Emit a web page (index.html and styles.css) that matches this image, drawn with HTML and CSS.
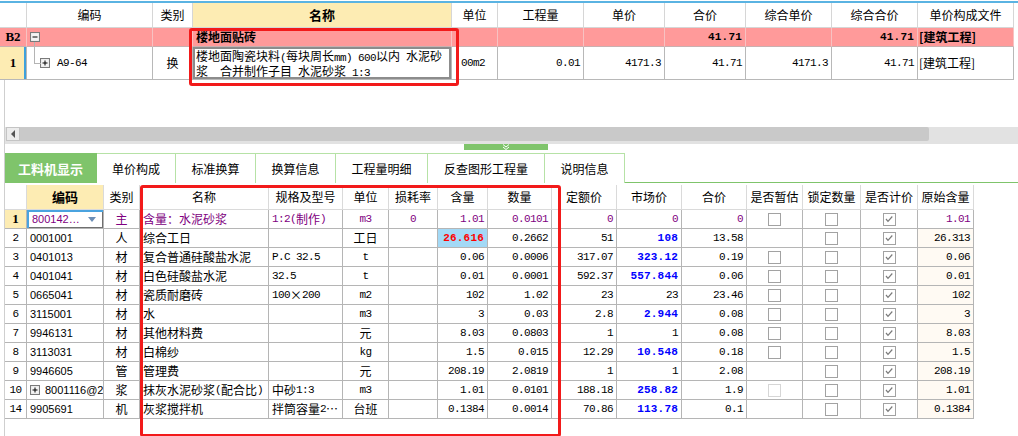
FILE: index.html
```html
<!DOCTYPE html>
<html>
<head>
<meta charset="utf-8">
<link rel="stylesheet" href="styles.css">
</head>
<body>
<div class="app">
  <div class="topline"></div>
  <div class="top">
    <div class="trow thead">
      <div class="c"></div>
      <div class="c ctr">编码</div>
      <div class="c ctr">类别</div>
      <div class="c ctr hl bold13">名称</div>
      <div class="c ctr">单位</div>
      <div class="c ctr">工程量</div>
      <div class="c ctr">单价</div>
      <div class="c ctr">合价</div>
      <div class="c ctr">综合单价</div>
      <div class="c ctr">综合合价</div>
      <div class="c ctr">单价构成文件</div>
    </div>
    <div class="trow tb2">
      <div class="c ctr serifb">B2</div>
      <div class="c tree-root"><svg class="tbox" width="10" height="10" viewBox="0 0 10 10"><rect x="0.5" y="0.5" width="9" height="9" fill="#e6e6e6" stroke="#7a7a7a"/><rect x="1.5" y="1.5" width="7" height="7" fill="#f4f4f4"/><path d="M2.5 5H7.5" stroke="#000"/></svg></div>
      <div class="c"></div>
      <div class="c b">楼地面贴砖</div>
      <div class="c"></div>
      <div class="c"></div>
      <div class="c"></div>
      <div class="c r mb">41.71</div>
      <div class="c"></div>
      <div class="c r mb">41.71</div>
      <div class="c b file">[建筑工程]</div>
    </div>
    <div class="trow tr1">
      <div class="c ctr serifb rsel">1</div>
      <div class="c tree-child"><svg class="tbox" width="10" height="10" viewBox="0 0 10 10"><rect x="0.5" y="0.5" width="9" height="9" fill="#e6e6e6" stroke="#7a7a7a"/><rect x="1.5" y="1.5" width="7" height="7" fill="#f4f4f4"/><path d="M2.5 5H7.5M5 2.5V7.5" stroke="#000"/></svg><span class="m code1">A9-64</span></div>
      <div class="c ctr">换</div>
      <div class="c edit"><div class="lines">楼地面陶瓷块料<span class="m">(</span>每块周长<span class="m">mm) 600</span>以内<span class="m"> </span>水泥砂<br>浆　合并制作子目<span class="m"> </span>水泥砂浆<span class="m"> 1:3</span></div></div>
      <div class="c m unit1">00m2</div>
      <div class="c r m">0.01</div>
      <div class="c r m">4171.3</div>
      <div class="c r m">41.71</div>
      <div class="c r m">4171.3</div>
      <div class="c r m">41.71</div>
      <div class="c file">[建筑工程]</div>
    </div>
  </div>

  <div class="lower">
    <div class="spacer"></div>
    <div class="hscroll">
      <div class="sbtn"><svg width="5" height="8" viewBox="0 0 5 8"><path d="M4 0V8L0 4Z" fill="#555"/></svg></div>
      <div class="thumb"></div>
    </div>
    <div class="split">
      <div class="grip"><svg width="10" height="6" viewBox="0 0 10 6"><path d="M2 0.5L5 3L8 0.5M2 3L5 5.5L8 3" stroke="#fff" fill="none" stroke-width="1"/></svg></div>
    </div>
    <div class="tabs">
      <div class="tab on" style="width:92px">工料机显示</div>
      <div class="tab" style="width:79px">单价构成</div>
      <div class="tab" style="width:80px">标准换算</div>
      <div class="tab" style="width:80px">换算信息</div>
      <div class="tab" style="width:92px">工程量明细</div>
      <div class="tab" style="width:117px">反查图形工程量</div>
      <div class="tab" style="width:80px">说明信息</div>
      <div class="tabfill"></div>
    </div>

    <div class="btable">
      <div class="brow bhead">
        <div class="c"></div>
        <div class="c ctr hl bold13">编码</div>
        <div class="c ctr">类别</div>
        <div class="c ctr">名称</div>
        <div class="c ctr">规格及型号</div>
        <div class="c ctr">单位</div>
        <div class="c ctr">损耗率</div>
        <div class="c ctr">含量</div>
        <div class="c ctr">数量</div>
        <div class="c ctr">定额价</div>
        <div class="c ctr">市场价</div>
        <div class="c ctr">合价</div>
        <div class="c ctr">是否暂估</div>
        <div class="c ctr">锁定数量</div>
        <div class="c ctr">是否计价</div>
        <div class="c ctr">原始含量</div>
      </div>

      <div class="brow bdata">
        <div class="c ctr serifb hlrow">1</div>
        <div class="c code p selcell">800142…<span class="dd"></span></div>
        <div class="c ctr p">主</div>
        <div class="c p">含量：水泥砂浆</div>
        <div class="c p"><span class="m">1:2(</span>制作<span class="m">)</span></div>
        <div class="c ctr m p">m3</div>
        <div class="c ctr m p">0</div>
        <div class="c r m p">1.01</div>
        <div class="c r m p">0.0101</div>
        <div class="c r m p">0</div>
        <div class="c r m p">0</div>
        <div class="c r m p">0</div>
        <div class="c ctr"><span class="cb"></span></div>
        <div class="c ctr"><span class="cb"></span></div>
        <div class="c ctr"><span class="cb"><svg width="10" height="10" viewBox="0 0 10 10"><path d="M2 5L4 7.3L8.3 2.5" stroke="#7a7a7a" stroke-width="1.2" fill="none"/></svg></span></div>
        <div class="c r m p">1.01</div>
      </div>

      <div class="brow bdata">
        <div class="c ctr m">2</div>
        <div class="c code">0001001</div>
        <div class="c ctr">人</div>
        <div class="c">综合工日</div>
        <div class="c"></div>
        <div class="c ctr">工日</div>
        <div class="c"></div>
        <div class="c r mb red hi">26.616</div>
        <div class="c r m">0.2662</div>
        <div class="c r m">51</div>
        <div class="c r mb blue">108</div>
        <div class="c r m">13.58</div>
        <div class="c ctr"></div>
        <div class="c ctr"><span class="cb"></span></div>
        <div class="c ctr"><span class="cb"><svg width="10" height="10" viewBox="0 0 10 10"><path d="M2 5L4 7.3L8.3 2.5" stroke="#7a7a7a" stroke-width="1.2" fill="none"/></svg></span></div>
        <div class="c r m cream">26.313</div>
      </div>

      <div class="brow bdata">
        <div class="c ctr m">3</div>
        <div class="c code">0401013</div>
        <div class="c ctr">材</div>
        <div class="c">复合普通硅酸盐水泥</div>
        <div class="c m">P.C 32.5</div>
        <div class="c ctr m">t</div>
        <div class="c"></div>
        <div class="c r m">0.06</div>
        <div class="c r m">0.0006</div>
        <div class="c r m">317.07</div>
        <div class="c r mb blue">323.12</div>
        <div class="c r m">0.19</div>
        <div class="c ctr"><span class="cb"></span></div>
        <div class="c ctr"><span class="cb"></span></div>
        <div class="c ctr"><span class="cb"><svg width="10" height="10" viewBox="0 0 10 10"><path d="M2 5L4 7.3L8.3 2.5" stroke="#7a7a7a" stroke-width="1.2" fill="none"/></svg></span></div>
        <div class="c r m cream">0.06</div>
      </div>

      <div class="brow bdata">
        <div class="c ctr m">4</div>
        <div class="c code">0401041</div>
        <div class="c ctr">材</div>
        <div class="c">白色硅酸盐水泥</div>
        <div class="c m">32.5</div>
        <div class="c ctr m">t</div>
        <div class="c"></div>
        <div class="c r m">0.01</div>
        <div class="c r m">0.0001</div>
        <div class="c r m">592.37</div>
        <div class="c r mb blue">557.844</div>
        <div class="c r m">0.06</div>
        <div class="c ctr"><span class="cb"></span></div>
        <div class="c ctr"><span class="cb"></span></div>
        <div class="c ctr"><span class="cb"><svg width="10" height="10" viewBox="0 0 10 10"><path d="M2 5L4 7.3L8.3 2.5" stroke="#7a7a7a" stroke-width="1.2" fill="none"/></svg></span></div>
        <div class="c r m cream">0.01</div>
      </div>

      <div class="brow bdata">
        <div class="c ctr m">5</div>
        <div class="c code">0665041</div>
        <div class="c ctr">材</div>
        <div class="c">瓷质耐磨砖</div>
        <div class="c"><span class="m">100</span>×<span class="m">200</span></div>
        <div class="c ctr m">m2</div>
        <div class="c"></div>
        <div class="c r m">102</div>
        <div class="c r m">1.02</div>
        <div class="c r m">23</div>
        <div class="c r m">23</div>
        <div class="c r m">23.46</div>
        <div class="c ctr"><span class="cb"></span></div>
        <div class="c ctr"><span class="cb"></span></div>
        <div class="c ctr"><span class="cb"><svg width="10" height="10" viewBox="0 0 10 10"><path d="M2 5L4 7.3L8.3 2.5" stroke="#7a7a7a" stroke-width="1.2" fill="none"/></svg></span></div>
        <div class="c r m cream">102</div>
      </div>

      <div class="brow bdata">
        <div class="c ctr m">6</div>
        <div class="c code">3115001</div>
        <div class="c ctr">材</div>
        <div class="c">水</div>
        <div class="c"></div>
        <div class="c ctr m">m3</div>
        <div class="c"></div>
        <div class="c r m">3</div>
        <div class="c r m">0.03</div>
        <div class="c r m">2.8</div>
        <div class="c r mb blue">2.944</div>
        <div class="c r m">0.08</div>
        <div class="c ctr"><span class="cb"></span></div>
        <div class="c ctr"><span class="cb"></span></div>
        <div class="c ctr"><span class="cb"><svg width="10" height="10" viewBox="0 0 10 10"><path d="M2 5L4 7.3L8.3 2.5" stroke="#7a7a7a" stroke-width="1.2" fill="none"/></svg></span></div>
        <div class="c r m cream">3</div>
      </div>

      <div class="brow bdata">
        <div class="c ctr m">7</div>
        <div class="c code">9946131</div>
        <div class="c ctr">材</div>
        <div class="c">其他材料费</div>
        <div class="c"></div>
        <div class="c ctr">元</div>
        <div class="c"></div>
        <div class="c r m">8.03</div>
        <div class="c r m">0.0803</div>
        <div class="c r m">1</div>
        <div class="c r m">1</div>
        <div class="c r m">0.08</div>
        <div class="c ctr"><span class="cb"></span></div>
        <div class="c ctr"><span class="cb"></span></div>
        <div class="c ctr"><span class="cb"><svg width="10" height="10" viewBox="0 0 10 10"><path d="M2 5L4 7.3L8.3 2.5" stroke="#7a7a7a" stroke-width="1.2" fill="none"/></svg></span></div>
        <div class="c r m cream">8.03</div>
      </div>

      <div class="brow bdata">
        <div class="c ctr m">8</div>
        <div class="c code">3113031</div>
        <div class="c ctr">材</div>
        <div class="c">白棉纱</div>
        <div class="c"></div>
        <div class="c ctr m">kg</div>
        <div class="c"></div>
        <div class="c r m">1.5</div>
        <div class="c r m">0.015</div>
        <div class="c r m">12.29</div>
        <div class="c r mb blue">10.548</div>
        <div class="c r m">0.18</div>
        <div class="c ctr"><span class="cb"></span></div>
        <div class="c ctr"><span class="cb"></span></div>
        <div class="c ctr"><span class="cb"><svg width="10" height="10" viewBox="0 0 10 10"><path d="M2 5L4 7.3L8.3 2.5" stroke="#7a7a7a" stroke-width="1.2" fill="none"/></svg></span></div>
        <div class="c r m cream">1.5</div>
      </div>

      <div class="brow bdata">
        <div class="c ctr m">9</div>
        <div class="c code">9946605</div>
        <div class="c ctr">管</div>
        <div class="c">管理费</div>
        <div class="c"></div>
        <div class="c ctr">元</div>
        <div class="c"></div>
        <div class="c r m">208.19</div>
        <div class="c r m">2.0819</div>
        <div class="c r m">1</div>
        <div class="c r m">1</div>
        <div class="c r m">2.08</div>
        <div class="c ctr"></div>
        <div class="c ctr"><span class="cb"></span></div>
        <div class="c ctr"><span class="cb"><svg width="10" height="10" viewBox="0 0 10 10"><path d="M2 5L4 7.3L8.3 2.5" stroke="#7a7a7a" stroke-width="1.2" fill="none"/></svg></span></div>
        <div class="c r m cream">208.19</div>
      </div>

      <div class="brow bdata">
        <div class="c ctr m">10</div>
        <div class="c code"><svg class="tbox" width="10" height="10" viewBox="0 0 10 10"><rect x="0.5" y="0.5" width="9" height="9" fill="#e6e6e6" stroke="#7a7a7a"/><rect x="1.5" y="1.5" width="7" height="7" fill="#f4f4f4"/><path d="M2.5 5H7.5M5 2.5V7.5" stroke="#000"/></svg><span class="code10">8001116@2</span></div>
        <div class="c ctr">浆</div>
        <div class="c">抹灰水泥砂浆<span class="m">(</span>配合比<span class="m">)</span></div>
        <div class="c">中砂<span class="m">1:3</span></div>
        <div class="c ctr m">m3</div>
        <div class="c"></div>
        <div class="c r m">1.01</div>
        <div class="c r m">0.0101</div>
        <div class="c r m">188.18</div>
        <div class="c r mb blue">258.82</div>
        <div class="c r m">1.9</div>
        <div class="c ctr"><span class="cb dis"></span></div>
        <div class="c ctr"><span class="cb"></span></div>
        <div class="c ctr"><span class="cb"><svg width="10" height="10" viewBox="0 0 10 10"><path d="M2 5L4 7.3L8.3 2.5" stroke="#7a7a7a" stroke-width="1.2" fill="none"/></svg></span></div>
        <div class="c r m cream">1.01</div>
      </div>

      <div class="brow bdata">
        <div class="c ctr m">14</div>
        <div class="c code">9905691</div>
        <div class="c ctr">机</div>
        <div class="c">灰浆搅拌机</div>
        <div class="c">拌筒容量<span class="m">2</span>…</div>
        <div class="c ctr">台班</div>
        <div class="c"></div>
        <div class="c r m">0.1384</div>
        <div class="c r m">0.0014</div>
        <div class="c r m">70.86</div>
        <div class="c r mb blue">113.78</div>
        <div class="c r m">0.1</div>
        <div class="c ctr"></div>
        <div class="c ctr"><span class="cb"></span></div>
        <div class="c ctr"><span class="cb"><svg width="10" height="10" viewBox="0 0 10 10"><path d="M2 5L4 7.3L8.3 2.5" stroke="#7a7a7a" stroke-width="1.2" fill="none"/></svg></span></div>
        <div class="c r m cream">0.1384</div>
      </div>
    </div>
  </div>

  <div class="anno anno-top"></div>
  <div class="anno anno-bottom"></div>
</div>
</body>
</html>
```

FILE: styles.css
```css
* { box-sizing: border-box; }
html, body { margin: 0; padding: 0; background: #fff; }
body {
  width: 1018px;
  height: 436px;
  overflow: hidden;
  font-family: "Noto Sans CJK SC", sans-serif;
  font-size: 12px;
  color: #000;
}
.app { position: relative; width: 1018px; height: 436px; }

.topline { margin-top: 1px; height: 2px; background: #5ab3e2; }

/* generic cell */
.c {
  position: relative;
  display: flex;
  align-items: center;
  padding: 0 3px;
  overflow: hidden;
  white-space: nowrap;
  border-right: 1px solid #d6d6d6;
  border-bottom: 1px solid #d6d6d6;
  line-height: 14px;
}
.ctr { justify-content: center; }
.r { justify-content: flex-end; }
.b { font-weight: bold; }
.bold13 { font-weight: bold; font-size: 13px; }
.hl { background: #fdecb3; }
.serifb { font-family: "Liberation Serif", serif; font-weight: bold; font-size: 13px; }

.m { font-family: "Liberation Mono", monospace; font-size: 11px; letter-spacing: -0.6px; }
.mb { font-family: "Liberation Mono", monospace; font-size: 11px; font-weight: bold; letter-spacing: 0.2px; }

/* top grid */
.top { width: 1014px; }
.trow {
  display: grid;
  grid-template-columns: 27px 126px 40px 259px 46px 86px 81px 81px 86px 86px 96px;
}
.thead { height: 25px; }
.tb2 { height: 19px; background: #ff9a9a; }
.tb2 .c { border-right-color: #f7c2c2; border-bottom-color: #c9b0b0; }
.tr1 { height: 33px; }
.tr1 .c { border-color: #b8b8b8; }
.tr1 .rsel { background: #fdecb3; box-shadow: inset -2px 0 0 #3ea1dc; }
.file { padding-left: 1px; }

.tbox { display: block; flex: none; }
.tree-root::after {
  content: "";
  position: absolute;
  left: 7px;
  top: 14px;
  height: 6px;
  border-left: 1px solid #b4b4b4;
}
.tree-child { padding-left: 13px; }
.tree-child::before {
  content: "";
  position: absolute;
  left: 7px;
  top: 0;
  width: 6px;
  height: 16px;
  border-left: 1px solid #b4b4b4;
  border-bottom: 1px solid #b4b4b4;
}
.code1 { margin-left: 7px; }
.edit {
  box-shadow: inset 0 0 0 2px #8c8c8c;
  padding: 1px 3px 0;
}
.lines { line-height: 14px; }
.lines .m { line-height: 1; }
.unit1 { padding-left: 9px; }

/* lower panel */
.lower { margin-left: 4px; border-left: 1px solid #cfcfcf; height: 356px; }
.spacer { height: 47px; }
.hscroll { height: 17px; background: #e2e2e2; display: flex; align-items: flex-start; }
.sbtn {
  width: 14px; height: 14px;
  margin-left: 1px;
  background: #ececec;
  border: 1px solid #c4c4c4;
  display: flex; align-items: center; justify-content: center;
}
.thumb { width: 909px; height: 14px; background: #c9c9c9; border-radius: 0 2px 2px 0; }
.split { height: 9px; }
.grip {
  margin-left: 459px;
  width: 84px;
  height: 6px;
  background: #7fc46b;
  display: flex; justify-content: center; align-items: flex-start;
}
.tabs { display: flex; height: 30px; margin-bottom: 2px; }
.tab {
  height: 30px;
  border-top: 1px solid #b6e2a6;
  border-right: 1px solid #b6e2a6;
  display: flex; align-items: center; justify-content: center;
  font-size: 12px;
  flex: none;
}
.tab.on { background: #7fc46b; color: #fff; font-weight: bold; font-size: 13px; border-color: #7fc46b; }
.tabfill { flex: 1; border-bottom: 1px solid #7fc46b; }

/* bottom grid */
.btable { width: 969px; }
.brow {
  display: grid;
  grid-template-columns: 22px 77px 36px 129px 74px 46px 49px 50px 64px 65px 65px 65px 56px 58px 57px 56px;
}
.bhead { height: 25px; }
.bhead .c { border-color: #dadada; }
.bdata { height: 19px; }
.bdata .c { border-color: #b5b5b5; }
.hlrow { background: #fdecb3; }
.code { font-family: "Liberation Sans", sans-serif; font-size: 11px; }
.code10 { margin-left: 5px; }
.selcell { box-shadow: inset 2px 2px 0 #4aa3df, inset -1px -1px 0 #6f6f6f; padding-left: 5px; }
.dd {
  margin-left: auto;
  margin-right: 4px;
  width: 0; height: 0;
  border-left: 4px solid transparent;
  border-right: 4px solid transparent;
  border-top: 5px solid #6c8eb6;
}
.p { color: #800080; }
.blue { color: #0000ff; }
.red { color: #ff0000; }
.hi { background: #a3d9f6; }
.cream { background: #fffaf3; }

.cb {
  width: 13px; height: 13px;
  border: 1px solid #a2a2a2;
  background: #fff;
  display: flex; align-items: center; justify-content: center;
}
.cb.dis { border-color: #d6d6d6; }

/* annotation overlays */
.anno { position: absolute; border: 3px solid #f21a1a; border-radius: 3px; pointer-events: none; }
.anno-top { left: 189px; top: 27px; width: 270px; height: 58px; }
.anno-bottom { left: 140px; top: 184px; width: 421px; height: 252px; }
```
